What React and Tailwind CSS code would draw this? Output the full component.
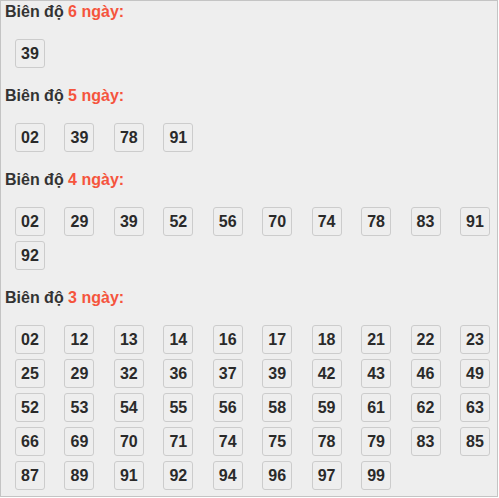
const sections = [
  { n: 6, nums: ["39"] },
  { n: 5, nums: ["02", "39", "78", "91"] },
  { n: 4, nums: ["02", "29", "39", "52", "56", "70", "74", "78", "83", "91", "92"] },
  {
    n: 3,
    nums: [
      "02", "12", "13", "14", "16", "17", "18", "21", "22", "23",
      "25", "29", "32", "36", "37", "39", "42", "43", "46", "49",
      "52", "53", "54", "55", "56", "58", "59", "61", "62", "63",
      "66", "69", "70", "71", "74", "75", "78", "79", "83", "85",
      "87", "89", "91", "92", "94", "96", "97", "99",
    ],
  },
];

export default function App() {
  return (
    <div
      className="w-[498px] h-[497px] border border-[#c4c4c4] bg-[#eeeeee] pt-[2px] pl-[4px]"
      style={{ fontFamily: '"Liberation Sans", Arial, sans-serif' }}
    >
      {sections.map((s) => (
        <div key={s.n} className="mb-[19px]">
          <div className="text-[16px] leading-[18px] font-bold text-[#333333]">
            Biên độ <span className="text-[#f5543d]">{s.n} ngày:</span>
          </div>
          <div className="mt-[18px] pl-[10px] flex flex-wrap gap-x-[19.44px] gap-y-[5px]">
            {s.nums.map((v, i) => (
              <div
                key={i}
                className="w-[30px] h-[29px] border border-[#cccccc] rounded-[3px] flex items-center justify-center text-[16px] font-bold text-[#2a2a2a]"
              >
                {v}
              </div>
            ))}
          </div>
        </div>
      ))}
    </div>
  );
}
